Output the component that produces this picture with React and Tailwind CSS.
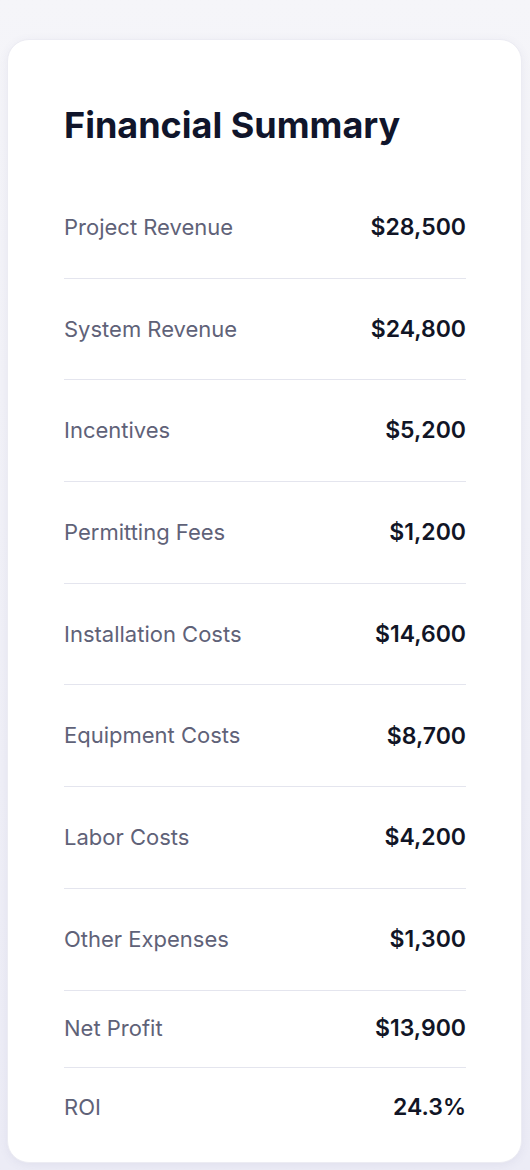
const rows = [
  { label: "Project Revenue", value: "$28,500" },
  { label: "System Revenue", value: "$24,800" },
  { label: "Incentives", value: "$5,200" },
  { label: "Permitting Fees", value: "$1,200" },
  { label: "Installation Costs", value: "$14,600" },
  { label: "Equipment Costs", value: "$8,700" },
  { label: "Labor Costs", value: "$4,200" },
  { label: "Other Expenses", value: "$1,300" },
];

function Row({ label, value, className }) {
  return (
    <div className={`flex items-center justify-between ${className}`}>
      <span className="text-[22px] text-[#5f6278]">{label}</span>
      <span className="text-[23px] font-semibold text-[#111526]">{value}</span>
    </div>
  );
}

export default function App() {
  return (
    <div
      className="min-h-[1170px] bg-gradient-to-b from-[#f5f5f9] to-[#ececf6] pt-[39px] pl-[7px] pr-[8px] pb-[7px]"
      style={{ fontFamily: "Inter, 'Noto Sans', sans-serif" }}
    >
      <div className="bg-white rounded-[22px] shadow-[0_2px_10px_rgba(90,90,140,0.08)] border border-[#ececf3] pt-[65px] pb-[14px] pl-[56px] pr-[55px]">
        <h1 className="text-[36px] leading-[40px] font-bold text-[#10152b] mb-[32px]">
          Financial Summary
        </h1>
        <div>
          {rows.map((r) => (
            <Row
              key={r.label}
              label={r.label}
              value={r.value}
              className="h-[101.7px] border-b border-[#e4e5ee]"
            />
          ))}
          <Row label="Net Profit" value="$13,900" className="h-[77px] border-b border-[#e4e5ee]" />
          <Row label="ROI" value="24.3%" className="h-[80px]" />
        </div>
      </div>
    </div>
  );
}
